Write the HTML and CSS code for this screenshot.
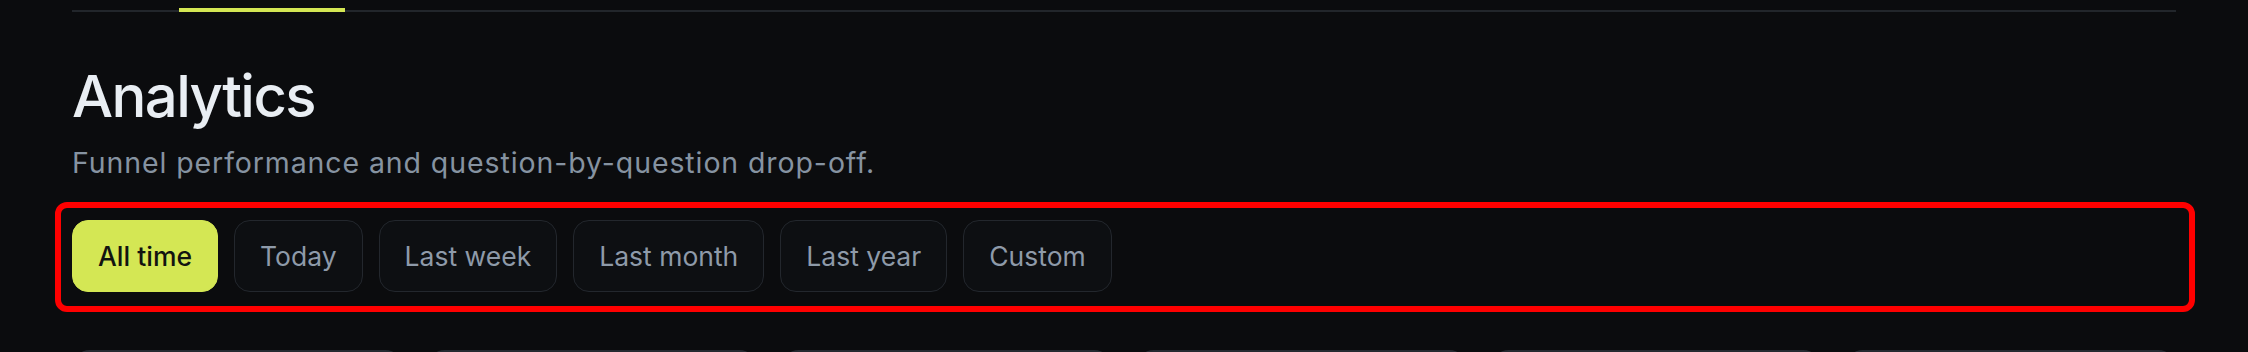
FILE: index.html
```html
<!DOCTYPE html>
<html lang="en">
<head>
    <meta charset="UTF-8">
    <meta name="viewport" content="width=device-width, initial-scale=1.0">
    <title>Analytics</title>
    <link rel="stylesheet" href="styles.css">
</head>
<body>
    <div class="page">
        <nav class="tabs">
            <span class="tab-indicator"></span>
        </nav>

        <h1>Analytics</h1>
        <p class="subtitle">Funnel performance and question-by-question drop-off.</p>

        <div class="highlight">
            <div class="range-filters">
                <button class="range active">All time</button>
                <button class="range">Today</button>
                <button class="range">Last week</button>
                <button class="range">Last month</button>
                <button class="range">Last year</button>
                <button class="range">Custom</button>
            </div>
        </div>

        <div class="stats">
            <div class="stat-card"></div>
            <div class="stat-card"></div>
            <div class="stat-card"></div>
            <div class="stat-card"></div>
            <div class="stat-card"></div>
            <div class="stat-card"></div>
        </div>
    </div>
</body>
</html>
```

FILE: styles.css
```css
body {
    margin: 0;
    background-color: #0b0c0e;
    font-family: Inter, "Noto Sans", sans-serif;
    overflow: hidden;
}
.page {
    padding: 0 72px;
}
.tabs {
    display: flex;
    align-items: flex-end;
    height: 10px;
    padding-left: 107px;
    border-bottom: 2px solid #22262b;
}
.tab-indicator {
    width: 166px;
    height: 4px;
    margin-bottom: -2px;
    background-color: #d4e754;
}
h1 {
    margin: 49px 0 0;
    font-size: 58px;
    line-height: 70px;
    font-weight: 500;
    color: #e9eef3;
    letter-spacing: -1.6px;
}
.subtitle {
    margin: 14px 0 0;
    font-size: 28.5px;
    line-height: 36px;
    color: #8693a1;
    letter-spacing: 0.9px;
}
.highlight {
    margin: 21px -19px 0 -17px;
    padding: 12px 13px 14px 11px;
    border: 6px solid #ff0000;
    border-radius: 12px;
}
.range-filters {
    display: flex;
    gap: 16px;
}
.range {
    height: 72px;
    padding: 0 25px;
    border: 1px solid #23272d;
    border-radius: 16px;
    background-color: #0d0f12;
    color: #8e9aa9;
    font-family: inherit;
    font-size: 26.5px;
    cursor: pointer;
}
.range.active {
    background-color: #d4e754;
    border-color: #d4e754;
    color: #121410;
    font-weight: 500;
}
.stats {
    display: grid;
    grid-template-columns: repeat(6, 1fr);
    gap: 24px;
    margin-top: 38px;
}
.stat-card {
    height: 160px;
    border: 2px solid #252a31;
    border-radius: 18px;
    background-color: #10131a;
}
```
